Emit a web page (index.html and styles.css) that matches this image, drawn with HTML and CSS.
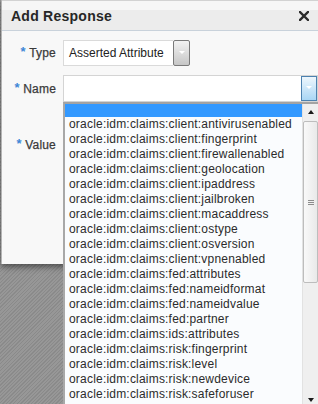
FILE: index.html
```html
<!DOCTYPE html>
<html>
<head>
<meta charset="utf-8">
<link rel="stylesheet" href="styles.css">
</head>
<body>
<div class="dialog">
  <div class="titlebar">
    <span class="title">Add Response</span>
    <svg class="close" width="10" height="10" viewBox="0 0 10 10"><path d="M1 1 L9 9 M9 1 L1 9" stroke="#2b2b2b" stroke-width="2.4" stroke-linecap="square"/></svg>
  </div>
  <div class="form">
    <div class="label"><span class="req">*</span> Type</div>
    <div class="select type">
      <span class="val">Asserted Attribute</span>
      <span class="btn gray"><i class="tri"></i></span>
    </div>
    <div class="label"><span class="req">*</span> Name</div>
    <div class="select name">
      <span class="val"></span>
      <span class="btn blue"><i class="tri"></i></span>
    </div>
    <div class="label"><span class="req">*</span> Value</div>
    <div class="textarea"></div>
  </div>
</div>

<div class="popup">
  <ul class="options">
    <li class="opt empty selected"></li>
    <li class="opt">oracle:idm:claims:client:antivirusenabled</li>
    <li class="opt">oracle:idm:claims:client:fingerprint</li>
    <li class="opt">oracle:idm:claims:client:firewallenabled</li>
    <li class="opt">oracle:idm:claims:client:geolocation</li>
    <li class="opt">oracle:idm:claims:client:ipaddress</li>
    <li class="opt">oracle:idm:claims:client:jailbroken</li>
    <li class="opt">oracle:idm:claims:client:macaddress</li>
    <li class="opt">oracle:idm:claims:client:ostype</li>
    <li class="opt">oracle:idm:claims:client:osversion</li>
    <li class="opt">oracle:idm:claims:client:vpnenabled</li>
    <li class="opt">oracle:idm:claims:fed:attributes</li>
    <li class="opt">oracle:idm:claims:fed:nameidformat</li>
    <li class="opt">oracle:idm:claims:fed:nameidvalue</li>
    <li class="opt">oracle:idm:claims:fed:partner</li>
    <li class="opt">oracle:idm:claims:ids:attributes</li>
    <li class="opt">oracle:idm:claims:risk:fingerprint</li>
    <li class="opt">oracle:idm:claims:risk:level</li>
    <li class="opt">oracle:idm:claims:risk:newdevice</li>
    <li class="opt">oracle:idm:claims:risk:safeforuser</li>
  </ul>
  <div class="scrollbar">
    <div class="sb-btn"><i class="arrow up"></i></div>
    <div class="thumb"><i class="grip"></i><i class="grip"></i><i class="grip"></i></div>
    <div class="sb-fill"></div>
    <div class="sb-btn"><i class="arrow down"></i></div>
  </div>
</div>
</body>
</html>
```

FILE: styles.css
```css
html, body {
  margin: 0;
  padding: 0;
  width: 318px;
  height: 404px;
  overflow: hidden;
}
body {
  position: relative;
  font-family: "Liberation Sans", Arial, sans-serif;
  background: repeating-linear-gradient(-45deg, #8a8a8a 0, #8a8a8a 1px, #979797 1px, #979797 2.5px);
}
.dialog {
  margin-left: 1px;
  width: 317px;
  border-left: 1px solid #b4b4b4;
  background: #f8f8f8;
  box-shadow: 0 3px 6px rgba(0, 0, 0, 0.45);
  box-sizing: border-box;
}
.titlebar {
  height: 31px;
  box-sizing: border-box;
  display: flex;
  align-items: flex-start;
  padding: 8px 9px 0 9px;
  background: linear-gradient(#f6f6f6 0, #f6f6f6 9px, #ececec 9px, #ececec 31px);
  border-bottom: 1px solid #c9d2db;
  border-top: 1px solid #d2d2d2;
}
.title {
  font-size: 14px;
  font-weight: bold;
  letter-spacing: 0.25px;
  line-height: 16px;
  color: #262626;
  margin-top: -1px;
}
.close {
  margin-left: auto;
  margin-top: 2px;
  display: block;
}
.form {
  display: grid;
  grid-template-columns: 54px auto;
  column-gap: 7px;
  row-gap: 9px;
  padding: 9px 0 85px 0;
  align-items: center;
}
.label {
  text-align: right;
  font-size: 12px;
  letter-spacing: 0.2px;
  line-height: 15px;
  color: #3a3a3a;
  white-space: nowrap;
  -webkit-text-stroke: 0.25px #3a3a3a;
}
.req {
  color: #3d86d6;
  font-size: 13px;
  font-weight: bold;
  -webkit-text-stroke: 0;
  position: relative;
  top: -1px;
}
.select {
  display: flex;
  box-sizing: border-box;
}
.select.type {
  width: 127px;
  height: 26px;
}
.select.type .val {
  flex: 1;
  background: #fff;
  border: 1px solid #dadada;
  border-right: none;
  font-size: 12px;
  line-height: 24px;
  padding-left: 5px;
  color: #222;
  white-space: nowrap;
}
.btn {
  box-sizing: border-box;
  display: flex;
  justify-content: center;
  align-items: center;
}
.btn.gray {
  width: 17px;
  border: 1px solid #7a7a7a;
  border-radius: 2px;
  background: linear-gradient(#f2f2f2, #c6c6c6);
}
.select.name {
  width: 255px;
  height: 27px;
  border: 1px solid #d4d4d4;
  background: #fff;
}
.select.name .val {
  flex: 1;
}
.btn.blue {
  width: 16px;
  border: 1px solid #4d82b0;
  background: linear-gradient(#eef7fd, #a9d6f5);
}
.tri {
  display: block;
  width: 0;
  height: 0;
  border-left: 3px solid transparent;
  border-right: 3px solid transparent;
  border-top: 3px solid #ffffff;
  margin-top: -2px;
}
.textarea {
  height: 68px;
  background: #fff;
  border: 1px solid #d4d4d4;
  box-sizing: border-box;
}
.popup {
  position: absolute;
  left: 63px;
  top: 102px;
  width: 257px;
  height: 306px;
  box-sizing: border-box;
  border-top: 2px solid #a3a3a3;
  border-left: 2px solid #a8a8a8;
  border-right: 2px solid #a8a8a8;
  background: #fafcfe;
  display: flex;
}
.options {
  list-style: none;
  margin: 0;
  padding: 0;
  flex: 1;
  overflow: hidden;
}
.opt {
  font-size: 12px;
  letter-spacing: 0.2px;
  line-height: 15px;
  height: 15px;
  padding-left: 4px;
  color: #2b2b2b;
  white-space: nowrap;
}
.opt.empty {
  height: 13px;
}
.opt.selected {
  background: #3399ff;
}
.scrollbar {
  width: 16px;
  flex: none;
  background: #efefef;
  border-left: 1px solid #e2e2e2;
  box-sizing: border-box;
  display: flex;
  flex-direction: column;
}
.sb-btn {
  height: 16px;
  display: flex;
  justify-content: center;
  align-items: center;
  flex: none;
}
.arrow {
  display: block;
  width: 0;
  height: 0;
  border-left: 3.5px solid transparent;
  border-right: 3.5px solid transparent;
}
.arrow.up {
  border-bottom: 4px solid #1a1a1a;
  margin-top: -1px;
}
.arrow.down {
  border-top: 4px solid #1a1a1a;
}
.thumb {
  margin-top: 1px;
  height: 162px;
  flex: none;
  box-sizing: border-box;
  border: 1px solid #bdbdbd;
  border-radius: 2px;
  background: linear-gradient(90deg, #f9f9f9, #e9e9e9);
  display: flex;
  flex-direction: column;
  justify-content: center;
  align-items: center;
  gap: 1px;
}
.grip {
  display: block;
  width: 6px;
  height: 1px;
  background: #8c8c8c;
}
.sb-fill {
  flex: 1;
}
```
